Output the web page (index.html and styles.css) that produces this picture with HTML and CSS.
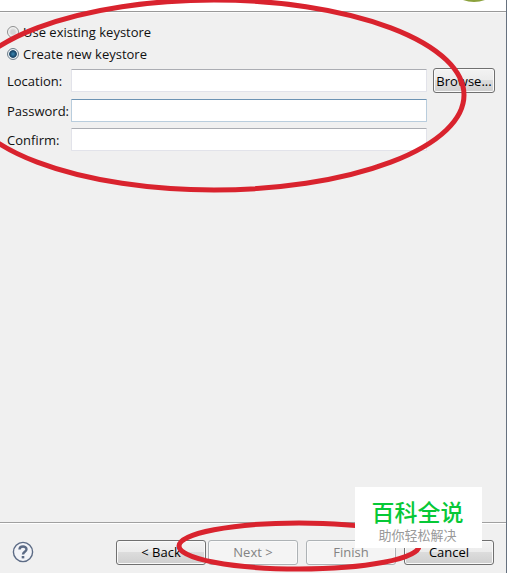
FILE: index.html
```html
<!DOCTYPE html>
<html lang="en">
<head>
    <meta charset="utf-8">
    <title>Keystore selection</title>
    <link rel="stylesheet" href="styles.css">
</head>
<body>
    <form class="wizard">
        <header class="banner">
            <svg class="banner-icon" width="28" height="2" viewBox="0 0 28 2"><path d="M3 0H25Q14 4 3 0Z" fill="#8ba13c"/></svg>
        </header>

        <main class="page">
            <label class="choice"><input type="radio" name="keystore">Use existing keystore</label>
            <label class="choice"><input type="radio" name="keystore" checked>Create new keystore</label>

            <div class="fields">
                <label for="location">Location:</label>
                <input id="location" type="text">
                <button class="browse" type="button">Browse...</button>

                <label for="password">Password:</label>
                <input id="password" class="active" type="password">

                <label for="confirm">Confirm:</label>
                <input id="confirm" type="password">
            </div>
        </main>

        <footer class="buttons">
            <button class="help" type="button" aria-label="Help">
                <svg width="22" height="22" viewBox="0 0 22 22" fill="none" stroke="#5c6b85">
                    <circle cx="11" cy="11" r="9.6" fill="#f3f4f8" stroke-width="1.4"/>
                    <path d="M7.5 8.5C7.5 4.5 14.5 4.5 14.5 8.3C14.5 10.7 11 10.8 11 13.4" stroke-width="2.4"/>
                    <path d="M11 15V17.4" stroke-width="2.6"/>
                </svg>
            </button>
            <div class="steps">
                <button type="button">&lt; Back</button>
                <button type="button" disabled>Next &gt;</button>
            </div>
            <button type="button" disabled>Finish</button>
            <button type="button">Cancel</button>
        </footer>
    </form>

    <!-- red marker rings -->
    <svg class="ring ring-fields" width="468" height="194" viewBox="0 0 468 194"><ellipse cx="214" cy="95" rx="250" ry="95"/></svg>
    <svg class="ring ring-buttons" width="246" height="54" viewBox="0 0 246 54"><ellipse cx="123" cy="27" rx="120" ry="23"/></svg>

    <div class="watermark">
        <strong>百科全说</strong>
        <span>助你轻松解决</span>
    </div>
</body>
</html>
```

FILE: styles.css
```css
* {
    box-sizing: border-box;
}

body {
    position: relative;
    min-height: 100vh;
    margin: 0;
    overflow: hidden;
    background: #f0f0f0;
    color: #111;
    font: 13px/18px "Open Sans", "Noto Sans", sans-serif;
}

.wizard {
    display: flex;
    flex-direction: column;
    min-height: 100vh;
    border-right: 1px solid #66717f;
}

.banner {
    display: flex;
    justify-content: flex-end;
    height: 12px;
    padding-right: 18px;
    background: #fff;
    border-bottom: 1px solid #999;
}

.page {
    flex: 1;
    padding: 8px 11px 0 7px;
    border-top: 1px solid #fafafa;
}

.choice {
    display: flex;
    align-items: center;
    gap: 4px;
    height: 22px;
}

.choice input {
    appearance: none;
    width: 12px;
    height: 12px;
    margin: 0;
    border: 1px solid #8e8f8f;
    border-radius: 50%;
    background: radial-gradient(circle, #d4d4d4 30%, #f4f4f4 65%);
}

.choice input:checked {
    border-color: #6f7f8c;
    background: radial-gradient(circle, #3c8ab5 0, #123e61 48%, #e8eef2 60%);
}

.fields {
    display: grid;
    grid-template-columns: 58px 1fr 62px;
    column-gap: 6px;
    row-gap: 6px;
    align-items: center;
    margin-top: 3px;
}

.fields label {
    grid-column: 1;
    white-space: nowrap;
}

.fields input {
    width: 100%;
    height: 23px;
    padding: 0 4px;
    border: 1px solid #e2e3ea;
    border-top-color: #abadb3;
    border-radius: 1px;
    background: #fff;
    font: inherit;
    outline: 0;
}

.fields .active {
    border-color: #b9cddd;
    border-top-color: #6c93b3;
}

button {
    width: 90px;
    height: 25px;
    padding: 0;
    border: 1px solid #707070;
    border-radius: 3px;
    background: linear-gradient(#f3f3f3, #ebebeb 50%, #dcdcdc 50%, #cfcfcf);
    box-shadow: inset 0 0 0 1px #fafafa;
    color: #000;
    font: inherit;
}

button:disabled {
    border-color: #adb2b5;
    background: #f4f4f4;
    color: #838383;
}

.browse {
    width: 62px;
}

.buttons {
    display: flex;
    align-items: center;
    gap: 8px;
    height: 51px;
    padding: 8px 12px 0;
    border-top: 1px solid #a0a0a0;
    box-shadow: inset 0 1px #fff;
}

.help {
    width: 22px;
    height: 22px;
    margin-right: auto;
    border: 0;
    background: none;
    box-shadow: none;
}

.help svg {
    display: block;
}

.steps {
    display: flex;
    gap: 2px;
}

.ring {
    position: absolute;
    fill: none;
    stroke: #d9232e;
    stroke-width: 5px;
    pointer-events: none;
}

.ring-fields {
    top: 0;
    left: 0;
}

.ring-buttons {
    right: 85px;
    bottom: 0;
}

.watermark {
    position: absolute;
    right: 25px;
    bottom: 25px;
    display: flex;
    flex-direction: column;
    align-items: center;
    width: 127px;
    height: 61px;
    padding: 10px 2px 0 0;
    background: #fff;
    color: #999;
    font: 13px/20px "Noto Sans CJK SC", sans-serif;
}

.watermark strong {
    color: #07c837;
    font-size: 23px;
    font-weight: 500;
    line-height: 28px;
}
```
